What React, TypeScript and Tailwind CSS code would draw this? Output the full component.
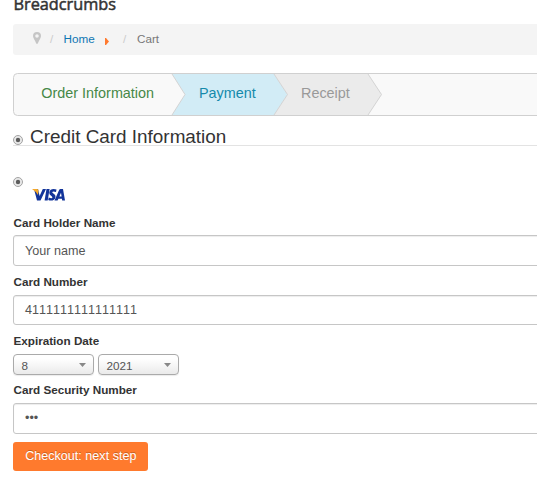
import React from "react";

function Radio() {
  return (
    <svg width="10" height="10" viewBox="0 0 10 10" className="block shrink-0">
      <circle cx="5" cy="5" r="4.5" fill="#e9e9e9" stroke="#a3a3a3" />
      <circle cx="5" cy="5" r="2.2" fill="#5c5c5c" />
    </svg>
  );
}

function Label({ children }: { children: React.ReactNode }) {
  return <div className="h-[17px] whitespace-nowrap pl-[0.5px] text-[11.7px] leading-[15px] font-bold text-[#333]">{children}</div>;
}

function Field({ value, size }: { value: string; size: string }) {
  return (
    <div className={`flex w-[560px] items-center rounded-[3px] border border-[#c6c6c6] bg-white pl-[11px] text-[12.6px] text-[#555] shadow-[inset_0_1px_1px_rgba(0,0,0,0.075)] ${size}`}>
      {value}
    </div>
  );
}

function Select({ value }: { value: string }) {
  return (
    <div className="flex h-[21px] w-[81px] items-center justify-between rounded-[4px] border border-[#aaa] bg-linear-to-b from-white from-20% to-[#eaeaea] pr-[7px] pl-[7px] text-[11.7px] text-[#555] shadow-[0_1px_1px_rgba(0,0,0,0.08)]">
      <span className="pt-[3px] pl-[0.4px] leading-4">{value}</span>
      <svg width="7" height="4" viewBox="0 0 7 4"><path d="M0 0H7L3.5 4Z" fill="#888" /></svg>
    </div>
  );
}

export default function App() {
  return (
    <div className="h-[500px] w-[537px] overflow-hidden bg-white pl-[13px] font-['Liberation_Sans',Arial,sans-serif]">
      <h2 className="-mt-[8px] h-[32px] pl-[0.5px] font-['Open_Sans',sans-serif] text-[16.3px] leading-[24px] font-normal text-[#333] [-webkit-text-stroke:0.5px_#333]">Breadcrumbs</h2>
      <nav className="flex h-[31px] w-[560px] items-center rounded-[3px] bg-[#f4f4f4] text-[11.7px] leading-[28px]">
        <svg width="8" height="12" viewBox="0 0 8 12" className="mb-[3px] ml-[20px]">
          <path fillRule="evenodd" d="M4 0A4 4 0 0 0 0 4C0 6 2 8 3 11Q4 13 5 11C6 8 8 6 8 4A4 4 0 0 0 4 0ZM4 2.2A1.8 1.8 0 1 1 4 5.8A1.8 1.8 0 0 1 4 2.2Z" fill="#c5c5c5" />
        </svg>
        <span className="-mt-[2px] ml-[9px] w-[13.500px] text-[#ccc]">/</span>
        <span className="-mt-[2px] w-[41px] text-[#0f76b3]">Home</span>
        <svg width="4" height="7" viewBox="0 0 4 7" className="mt-[3px]"><path d="M0 0H1L4 3.5L1 7H0Z" fill="#ff7a2f" /></svg>
        <span className="-mt-[2px] ml-[14.500px] w-[14px] text-[#ccc]">/</span>
        <span className="-mt-[2px] text-[#777]">Cart</span>
      </nav>

      <div className="mt-[18px] grid h-[43px] w-[560px]">
        <svg width="560" height="43" viewBox="0 0 560 43" className="col-start-1 row-start-1">
          <rect x="0.5" y="0.5" width="559" height="42" rx="4" fill="#f9f9f9" />
          <path d="M159 1H261L274.500 21.500L261 42H159L172 21.500Z" fill="#d2ecf6" />
          <path d="M261 1H355L368.500 21.500L355 42H261L274.500 21.500Z" fill="#ebebeb" />
          <path d="M159 1L172 21.500L159 42M261 1L274.500 21.500L261 42M355 1L368.500 21.500L355 42" fill="none" stroke="#d4d4d4" />
          <rect x="0.5" y="0.5" width="559" height="42" rx="4" fill="none" stroke="#d0d0d0" />
        </svg>
        <div className="col-start-1 row-start-1 flex pl-[28.300px] text-[14.4px] leading-[40px]">
          <span className="w-[157.700px] text-[#468847]">Order Information</span>
          <span className="w-[102px] text-[#148aab]">Payment</span>
          <span className="text-[#999]">Receipt</span>
        </div>
      </div>

      <div className="flex h-[30px] w-[560px]">
        <div className="w-[17px] border-b border-[#e3e3e3] pt-[19px]"><Radio /></div>
        <h3 className="flex-1 border-b border-[#e3e3e3] text-[18.9px] leading-[41px] font-normal text-[#333]">Credit Card Information</h3>
      </div>

      <div className="flex h-[69px] pt-[31px]">
        <Radio />
        <svg width="34" height="14" viewBox="0 0 34 14" className="mt-[11px] ml-[9px]">
          <path d="M2 1H6L7.600 8L10.800 1H14L8.500 12.500H5L2.500 3Z" fill="#12349a" />
          <path d="M0 1H5.200Q6.500 1 6.500 3L6 7Q4 3.500 0 1Z" fill="#f4a82a" />
          <path d="M14.500 1H17.600L15.700 12.500H12.600Z" fill="#12349a" />
          <path d="M24.500 1.600L24 4Q20.500 2.800 20.300 4.300C20.300 5.500 23.800 5.900 23.500 8.900C23.100 12.600 19 13.200 16.200 12L16.700 9.400Q20 11 20.400 9.400C20.500 7.900 17.100 7.700 17.300 4.500C17.600 1 21.500.3 24.500 1.600Z" fill="#12349a" />
          <path fillRule="evenodd" d="M28.500 1H31L33 12.500H30.200L29.900 10.800H26.400L25.600 12.500H22.500L27.100 2Q27.500 1 28.500 1ZM29 4.800L27.400 8.500H29.600Z" fill="#12349a" />
        </svg>
      </div>

      <Label>Card Holder Name</Label>
      <div className="mt-[3px] leading-[20px]"><Field value="Your name" size="h-[31px] pt-[1px]" /></div>
      <div className="mt-[8px]"><Label>Card Number</Label></div>
      <div className="mt-[4px] [font-kerning:none]"><Field value="4111111111111111" size="h-[30px]" /></div>
      <div className="mt-[8px]"><Label>Expiration Date</Label></div>
      <div className="mt-[4px] flex gap-1"><Select value="8" /><Select value="2021" /></div>
      <div className="mt-[7px]"><Label>Card Security Number</Label></div>
      <div className="mt-[4px]"><Field value="•••" size="h-[31px]" /></div>
      <button className="mt-[8px] block h-[29px] w-[135px] rounded-[3px] bg-[#ff7a2d] pl-[0.6px] text-[12.6px] leading-[29px] text-white [text-shadow:0_-1px_0_rgba(0,0,0,0.25)]"><span className="block h-[30px]">Checkout: next step</span></button>
    </div>
  );
}
